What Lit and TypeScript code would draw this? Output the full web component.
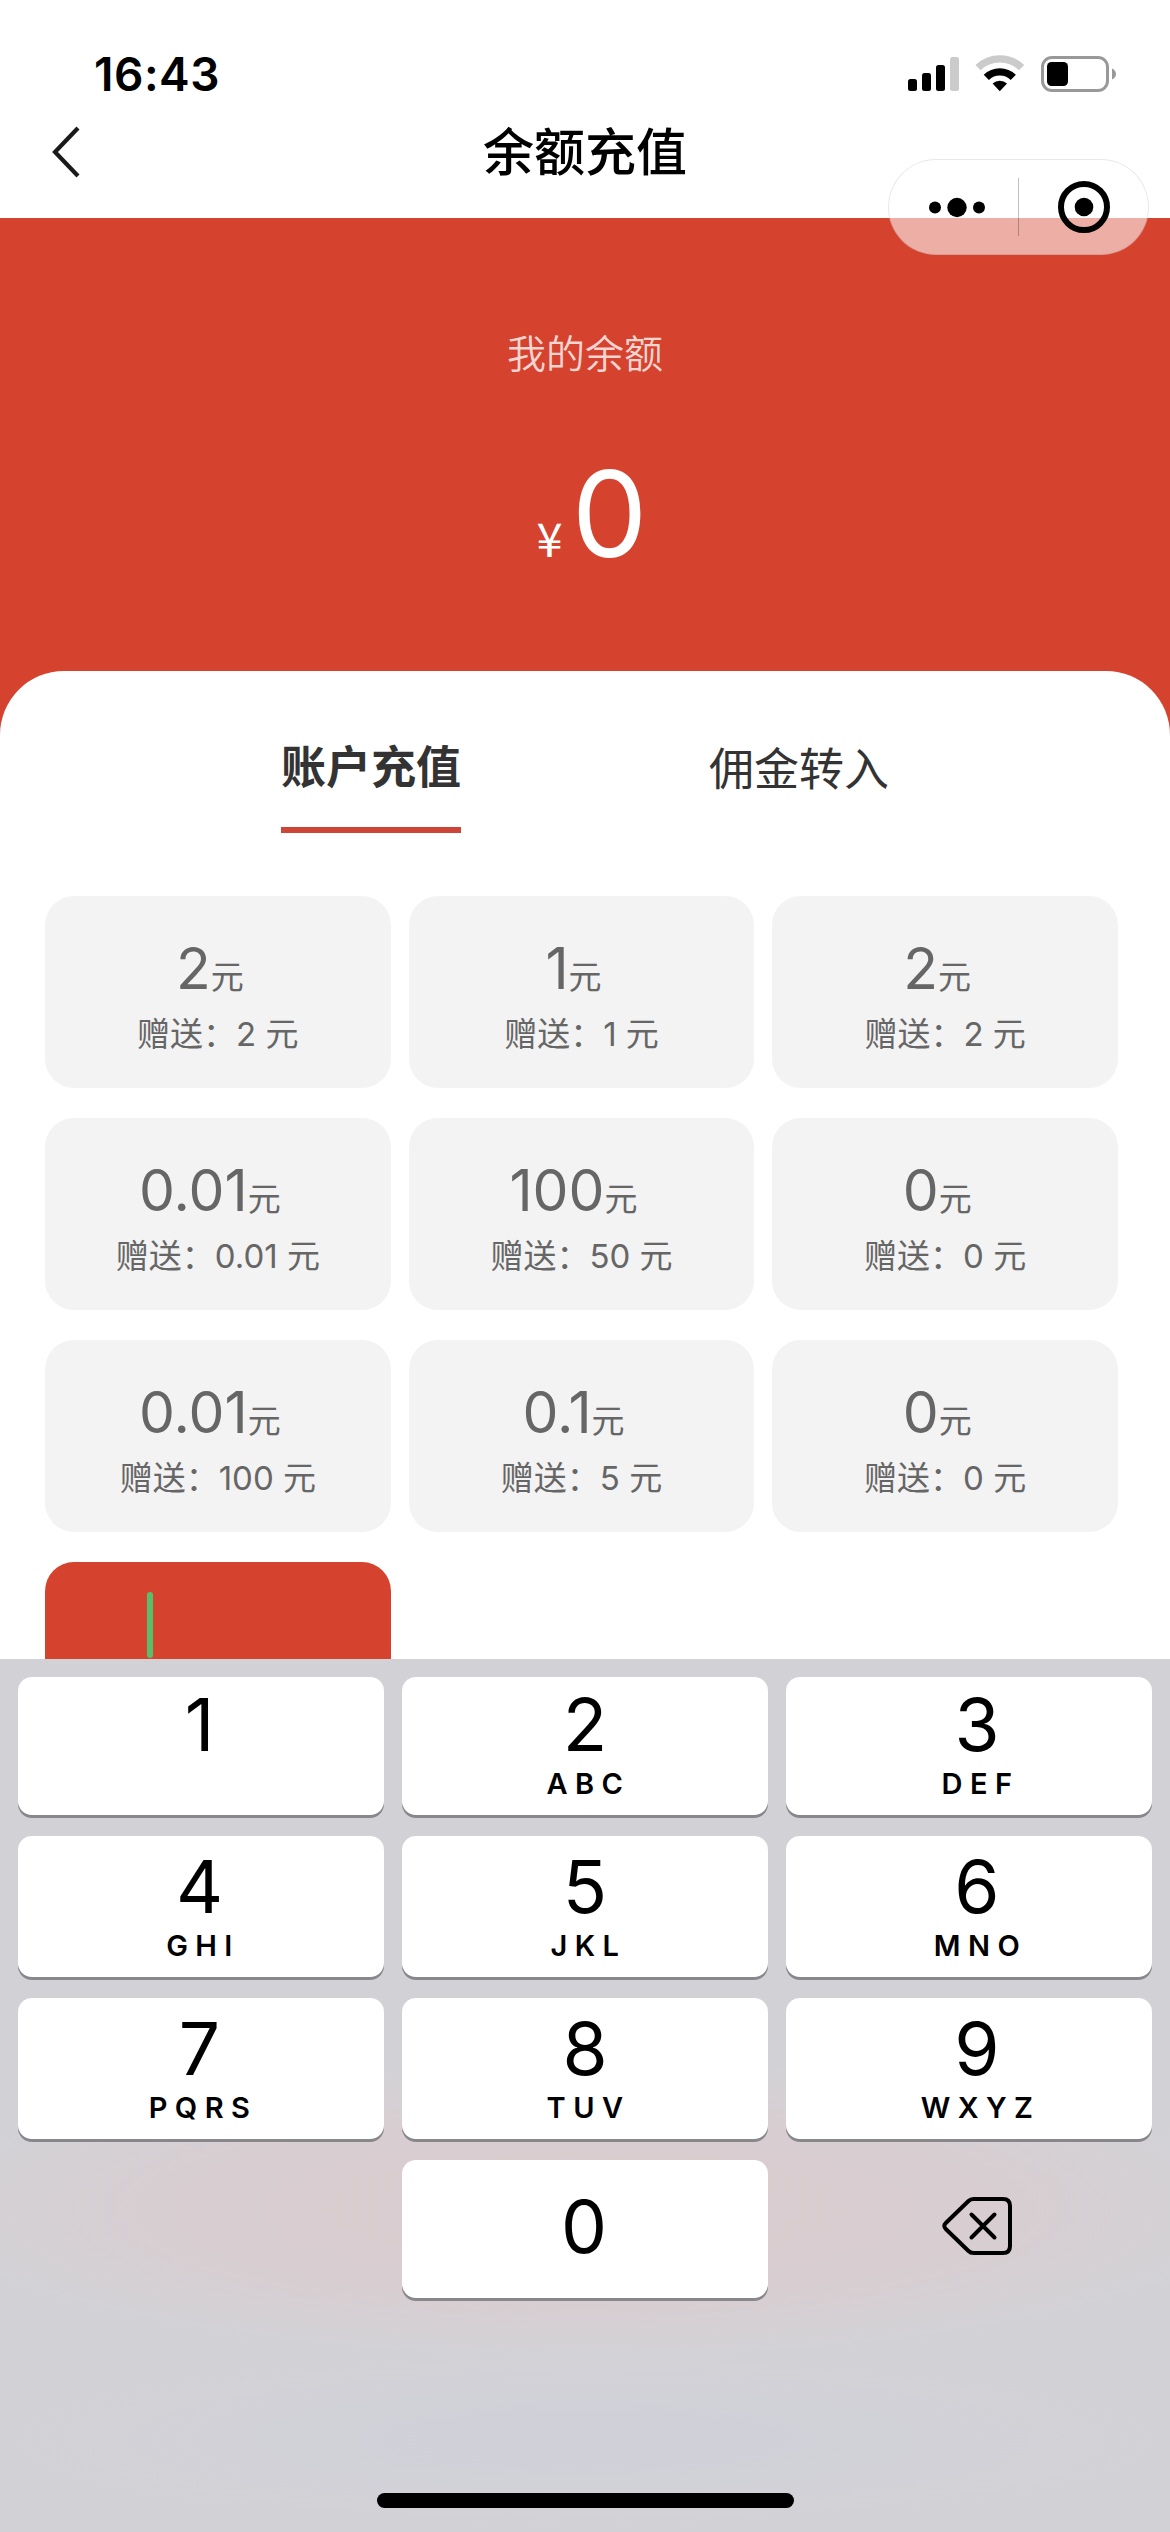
import { LitElement, html, css, svg, nothing } from "lit";
import { customElement, property } from "lit/decorators.js";

interface Plan {
  amount: string;
  gift: string;
}

interface Key {
  digit: string;
  letters: string;
}

const PLANS: Plan[] = [
  { amount: "2", gift: "2" },
  { amount: "1", gift: "1" },
  { amount: "2", gift: "2" },
  { amount: "0.01", gift: "0.01" },
  { amount: "100", gift: "50" },
  { amount: "0", gift: "0" },
  { amount: "0.01", gift: "100" },
  { amount: "0.1", gift: "5" },
  { amount: "0", gift: "0" },
];

const KEYS: Key[] = [
  { digit: "1", letters: "" },
  { digit: "2", letters: "ABC" },
  { digit: "3", letters: "DEF" },
  { digit: "4", letters: "GHI" },
  { digit: "5", letters: "JKL" },
  { digit: "6", letters: "MNO" },
  { digit: "7", letters: "PQRS" },
  { digit: "8", letters: "TUV" },
  { digit: "9", letters: "WXYZ" },
];

@customElement("status-bar")
export class StatusBar extends LitElement {
  static styles = css`
    :host {
      display: flex;
      align-items: center;
      justify-content: space-between;
      box-sizing: border-box;
      height: 106px;
      padding: 42px 53px 0 94px;
    }
    .time {
      font-size: 46px;
      line-height: 60px;
      font-weight: 600;
      letter-spacing: 0.5px;
      color: #000;
    }
    .icons {
      display: block;
      width: 209px;
      height: 38px;
    }
  `;

  render() {
    return html`
      <span class="time">16:43</span>
      <svg class="icons" viewBox="0 0 209 38">
        <rect x="0" y="24" width="9" height="12" rx="2.5" />
        <rect x="14" y="18" width="9" height="18" rx="2.5" />
        <rect x="28" y="10" width="9" height="26" rx="2.5" />
        <rect x="42" y="2" width="9" height="34" rx="2.5" fill="#cbcbcb" />
        ${svg`
          <path d="M70 12.6A31.5 31.5 0 0 1 113.6 12.6" fill="none" stroke="#cbcbcb" stroke-width="7.4" />
          <path d="M78.3 22.3A19.4 19.4 0 0 1 105.3 22.3" fill="none" stroke="#000" stroke-width="7.4" />
          <path d="M91.8 36.2L84.6 28.6A10.4 10.4 0 0 1 99 28.6Z" />
        `}
        <rect x="134.5" y="2.5" width="65" height="33" rx="9.5" fill="none" stroke="#999" stroke-width="3" />
        <rect x="139" y="7" width="21" height="24" rx="4.5" />
        <path d="M204 13.5Q208 15.5 208 19T204 24.5Z" fill="#999" />
      </svg>
    `;
  }
}

@customElement("nav-bar")
export class NavBar extends LitElement {
  static styles = css`
    :host {
      display: grid;
      grid-template-columns: 1fr auto 1fr;
      align-items: center;
      box-sizing: border-box;
      height: 112px;
      padding: 0 50px 19px;
      position: relative;
    }
    .back {
      display: block;
      width: 32px;
      height: 54px;
      margin-bottom: 2px;
    }
    .title {
      font-size: 51px;
      line-height: 60px;
      font-weight: 500;
      color: #000;
    }
    .capsule {
      position: absolute;
      z-index: 2;
      right: 21px;
      top: 53px;
      box-sizing: border-box;
      width: 261px;
      height: 96px;
      border: 1px solid rgba(0, 0, 0, 0.09);
      border-radius: 48px;
      background: rgba(255, 255, 255, 0.57);
    }
    .capsule svg {
      display: block;
      width: 259px;
      height: 94px;
    }
  `;

  render() {
    return html`
      <svg class="back" viewBox="0 0 32 54">
        <path d="M28 3L5 27L28 51" fill="none" stroke="#1a1a1a" stroke-width="4.2" />
      </svg>
      <span class="title">余额充值</span>
      <div class="capsule">
        <svg viewBox="0 0 259 94">
          <circle cx="46" cy="47.5" r="6" />
          <circle cx="68" cy="47.5" r="9.7" />
          <circle cx="90" cy="47.5" r="6" />
          <rect x="129" y="18" width="1" height="58" fill="#000" opacity="0.25" />
          <circle cx="195" cy="47" r="23" fill="none" stroke="#000" stroke-width="6" />
          <circle cx="195" cy="47" r="9.3" />
        </svg>
      </div>
    `;
  }
}

@customElement("plan-card")
export class PlanCard extends LitElement {
  @property() amount = "";
  @property() gift = "";

  static styles = css`
    :host {
      display: flex;
      flex-direction: column;
      align-items: center;
      box-sizing: border-box;
      height: 192px;
      padding-top: 43px;
      border-radius: 29px;
      background: #f3f3f3;
      color: #666;
      white-space: nowrap;
    }
    .amount {
      padding-right: 16px;
      font-size: 57px;
      line-height: 60px;
    }
    .unit {
      font-size: 33px;
      line-height: 0;
    }
    .gift {
      margin-top: 17px;
      font-size: 33px;
      line-height: 36px;
    }
  `;

  render() {
    return html`
      <div class="amount">${this.amount}<span class="unit">元</span></div>
      <div class="gift">赠送：${this.gift} 元</div>
    `;
  }
}

@customElement("num-pad")
export class NumPad extends LitElement {
  static styles = css`
    :host {
      display: flex;
      flex-direction: column;
      align-items: center;
      justify-content: space-between;
      box-sizing: border-box;
      flex: none;
      height: 873px;
      padding: 18px 18px 24px;
      background:
        radial-gradient(ellipse 680px 150px at 50% 550px, rgba(218, 203, 207, 0.9) 0%, rgba(218, 204, 207, 0.8) 55%, rgba(214, 208, 212, 0) 100%),
        radial-gradient(ellipse 600px 90px at 50% 780px, rgba(207, 207, 218, 0.8), rgba(208, 209, 216, 0)),
        #d2d2d6;
      color: #000;
    }
    .keys {
      display: grid;
      grid-template-columns: repeat(3, 366px);
      grid-template-rows: 138px 141px 141px 138px;
      gap: 21px 18px;
    }
    .key {
      display: flex;
      flex-direction: column;
      align-items: center;
      box-sizing: border-box;
      padding-top: 15px;
      border-radius: 14px;
      background: #fff;
      box-shadow: 0 3px 0 #88888c;
    }
    .key:nth-child(-n + 3) {
      padding-top: 12px;
    }
    .key:nth-child(3n) {
      padding-left: 16px;
    }
    .key:nth-child(3n + 1) {
      padding-right: 3px;
    }
    .digit {
      font-size: 73px;
      line-height: 71px;
    }
    .letters {
      margin-top: 8px;
      padding-left: 7px;
      font-size: 29px;
      line-height: 31px;
      font-weight: 600;
      letter-spacing: 7.4px;
    }
    .key.zero {
      grid-column: 2;
      justify-content: center;
      padding: 0 2px 5px 0;
    }
    .erase {
      display: flex;
      align-items: center;
      justify-content: center;
      padding: 0 0 7px 15px;
    }
    .erase svg {
      display: block;
      width: 72px;
      height: 60px;
    }
    .home {
      width: 417px;
      height: 15px;
      border-radius: 7.5px;
      background: #000;
    }
  `;

  render() {
    return html`
      <div class="keys">
        ${KEYS.map(
          (k) => html`
            <div class="key">
              <span class="digit">${k.digit}</span>
              ${k.letters ? html`<span class="letters">${k.letters}</span>` : nothing}
            </div>
          `,
        )}
        <div class="key zero"><span class="digit">0</span></div>
        <div class="erase">
          <svg viewBox="0 0 72 60" fill="none" stroke="#000" stroke-width="4" stroke-linecap="round" stroke-linejoin="round">
            <path d="M32.5 3H62Q69 3 69 10V50Q69 57 62 57H32.5Q29.5 57 27.5 55L4.8 33Q1.8 30 4.8 27L27.5 5Q29.5 3 32.5 3Z" />
            <path d="M30.5 18.5L53.5 41.5M53.5 18.5L30.5 41.5" />
          </svg>
        </div>
      </div>
      <div class="home"></div>
    `;
  }
}

@customElement("app-root")
export class AppRoot extends LitElement {
  static styles = css`
    :host {
      display: flex;
      flex-direction: column;
      width: 1170px;
      height: 2532px;
      overflow: hidden;
      background: #fff;
      font-family: Inter, "Noto Sans CJK SC", sans-serif;
    }
    .page {
      flex: 1;
      min-height: 0;
      overflow: hidden;
      background: #d5432f;
    }
    .hero {
      display: flex;
      flex-direction: column;
      align-items: center;
      box-sizing: border-box;
      height: 453px;
      padding-top: 116px;
      color: #fff;
    }
    .label {
      font-size: 39px;
      line-height: 40px;
      font-weight: 350;
      color: rgba(255, 255, 255, 0.78);
    }
    .balance {
      display: flex;
      align-items: baseline;
      gap: 9px;
      margin-top: 80px;
      padding-left: 14px;
      line-height: 120px;
    }
    .yen {
      font-family: "Noto Sans CJK SC", sans-serif;
      font-size: 47px;
      line-height: 50px;
    }
    .value {
      font-size: 120px;
      font-weight: 370;
    }
    .panel {
      min-height: 900px;
      border-radius: 64px 64px 0 0;
      background: #fff;
    }
    .tabs {
      display: flex;
      justify-content: center;
      gap: 248px;
      padding: 74px 0 63px;
      color: #333;
      font-size: 45px;
      line-height: 45px;
    }
    .tab {
      padding-top: 2px;
    }
    .tab.active {
      padding: 0 0 37px;
      border-bottom: 6px solid #cd4537;
      font-weight: 700;
    }
    .grid {
      display: grid;
      grid-template-columns: repeat(3, 1fr);
      gap: 30px 18px;
      padding: 0 52px 0 45px;
    }
    .custom {
      box-sizing: border-box;
      height: 192px;
      padding: 30px 0 0 102px;
      border-radius: 29px;
      background: #d5432f;
    }
    .caret {
      width: 6px;
      height: 66px;
      border-radius: 3px;
      background: #58c06b;
    }
    .top {
      background: #fff;
      flex: none;
    }
  `;

  render() {
    return html`
      <header class="top">
        <status-bar></status-bar>
        <nav-bar></nav-bar>
      </header>
      <main class="page">
        <section class="hero">
          <div class="label">我的余额</div>
          <div class="balance"><span class="yen">¥</span><span class="value">0</span></div>
        </section>
        <section class="panel">
          <div class="tabs">
            <div class="tab active">账户充值</div>
            <div class="tab">佣金转入</div>
          </div>
          <div class="grid">
            ${PLANS.map((p) => html`<plan-card .amount=${p.amount} .gift=${p.gift}></plan-card>`)}
            <div class="custom"><div class="caret"></div></div>
          </div>
        </section>
      </main>
      <num-pad></num-pad>
    `;
  }
}
